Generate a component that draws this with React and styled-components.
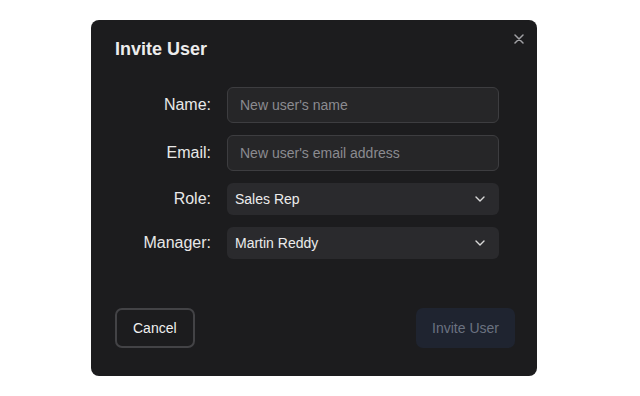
import React from 'react';
import styled, { createGlobalStyle } from 'styled-components';

const GlobalStyle = createGlobalStyle`
  html, body {
    margin: 0;
    padding: 0;
    background: #ffffff;
    font-family: 'Liberation Sans', Arial, sans-serif;
  }
`;

const Page = styled.div`
  display: flex;
  align-items: center;
  min-height: 396px;
  padding-left: 91px;
  box-sizing: border-box;
`;

const Dialog = styled.div`
  position: relative;
  width: 446px;
  height: 356px;
  box-sizing: border-box;
  background: #1c1c1e;
  border-radius: 8px;
  padding: 18px 24px 28px 24px;
  display: flex;
  flex-direction: column;
`;

const Title = styled.h2`
  margin: 0 0 27px 0;
  color: #ececec;
  font-size: 18px;
  line-height: 22px;
  font-weight: 700;
`;

const Close = styled.button`
  position: absolute;
  top: 12px;
  right: 11px;
  width: 14px;
  height: 14px;
  padding: 0;
  border: none;
  background: none;
  color: #a0a0a4;
  display: flex;
  align-items: center;
  justify-content: center;
  svg {
    display: block;
  }
`;

const Form = styled.div`
  display: grid;
  grid-template-columns: 96px 272px;
  column-gap: 16px;
  row-gap: 12px;
  align-items: center;
`;

const Label = styled.label`
  text-align: right;
  color: #e8e8e8;
  font-size: 16px;
`;

const Input = styled.input`
  height: 36px;
  box-sizing: border-box;
  background: #262628;
  border: 1px solid #3d3d40;
  border-radius: 6px;
  padding: 0 12px;
  color: #e8e8e8;
  font-family: inherit;
  font-size: 14px;
  &::placeholder {
    color: #8b8b90;
  }
`;

const Select = styled.div`
  height: 32px;
  box-sizing: border-box;
  background: #2a2a2d;
  border-radius: 6px;
  padding: 0 14px 0 8px;
  display: flex;
  align-items: center;
  justify-content: space-between;
  color: #ececec;
  font-size: 14px;
`;

const Footer = styled.div`
  margin-top: auto;
  display: flex;
  justify-content: space-between;
  align-items: center;
  margin-right: -2px;
`;

const Button = styled.button`
  height: 40px;
  box-sizing: border-box;
  border-radius: 7px;
  font-family: inherit;
  font-size: 14px;
  padding: 0 16px;
  border: ${({ primary }) => (primary ? 'none' : '2px solid #434346')};
  background: ${({ primary }) => (primary ? '#1f2430' : 'transparent')};
  color: ${({ primary }) => (primary ? '#6b7280' : '#f0f0f0')};
  min-width: ${({ primary }) => (primary ? '99px' : '78px')};
`;

const Chevron = () => (
  <svg width="10" height="6" viewBox="0 0 10 6" fill="none">
    <path d="M1 1l4 4 4-4" stroke="#d8d8d8" strokeWidth="1.4" strokeLinecap="round" strokeLinejoin="round" />
  </svg>
);

export default function App() {
  return (
    <>
      <GlobalStyle />
      <Page>
        <Dialog>
          <Close aria-label="Close">
            <svg width="10" height="10" viewBox="0 0 10 10">
              <path d="M1 1l8 8M9 1l-8 8" stroke="currentColor" strokeWidth="1.5" strokeLinecap="round" />
            </svg>
          </Close>
          <Title>Invite User</Title>
          <Form>
            <Label>Name:</Label>
            <Input placeholder="New user's name" />
            <Label>Email:</Label>
            <Input placeholder="New user's email address" />
            <Label>Role:</Label>
            <Select>
              <span>Sales Rep</span>
              <Chevron />
            </Select>
            <Label>Manager:</Label>
            <Select>
              <span>Martin Reddy</span>
              <Chevron />
            </Select>
          </Form>
          <Footer>
            <Button>Cancel</Button>
            <Button primary>Invite User</Button>
          </Footer>
        </Dialog>
      </Page>
    </>
  );
}
